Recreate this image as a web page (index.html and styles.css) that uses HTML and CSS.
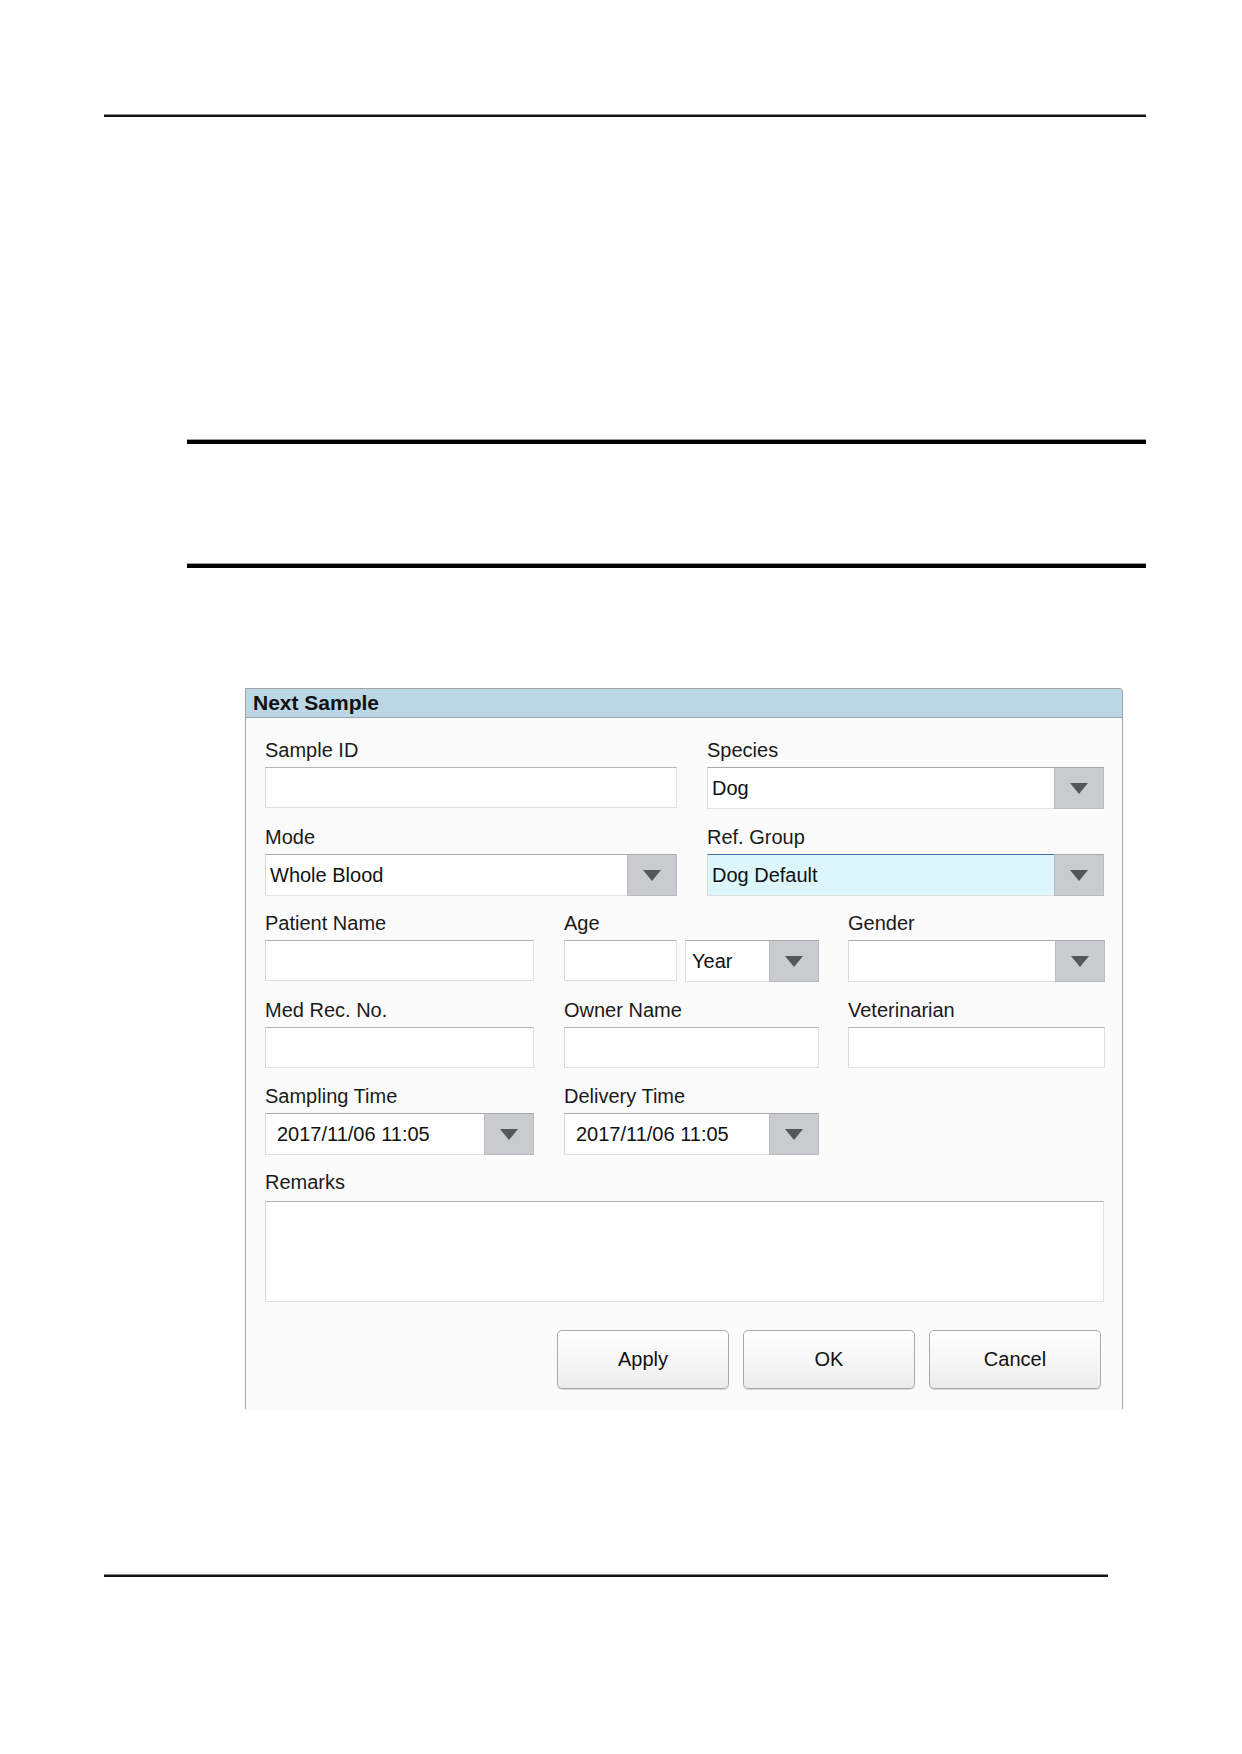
FILE: index.html
```html
<!DOCTYPE html>
<html lang="en">
<head>
<meta charset="utf-8">
<title>Next Sample</title>
<link rel="stylesheet" href="styles.css">
</head>
<body>
<div class="page">
  <div class="rule rule-top"></div>

  <div class="note">
    <div class="rule-thick"></div>
    <div class="note-body"></div>
    <div class="rule-thick"></div>
  </div>

  <div class="dialog">
    <div class="dialog-title">Next Sample</div>
    <div class="dialog-body">
      <div class="grid-2">
        <div class="field">
          <label class="lbl">Sample ID</label>
          <div class="input"></div>
        </div>
        <div class="field">
          <label class="lbl">Species</label>
          <div class="select"><span class="val">Dog</span><span class="btn"><i class="tri"></i></span></div>
        </div>
        <div class="field">
          <label class="lbl">Mode</label>
          <div class="select"><span class="val">Whole Blood</span><span class="btn"><i class="tri"></i></span></div>
        </div>
        <div class="field">
          <label class="lbl">Ref. Group</label>
          <div class="select focused"><span class="val">Dog Default</span><span class="btn"><i class="tri"></i></span></div>
        </div>
      </div>

      <div class="grid-3">
        <div class="field">
          <label class="lbl">Patient Name</label>
          <div class="input"></div>
        </div>
        <div class="field">
          <label class="lbl">Age</label>
          <div class="age-row">
            <div class="input age"></div>
            <div class="select unit"><span class="val">Year</span><span class="btn"><i class="tri"></i></span></div>
          </div>
        </div>
        <div class="field">
          <label class="lbl">Gender</label>
          <div class="select"><span class="val"></span><span class="btn"><i class="tri"></i></span></div>
        </div>

        <div class="field">
          <label class="lbl">Med Rec. No.</label>
          <div class="input"></div>
        </div>
        <div class="field">
          <label class="lbl">Owner Name</label>
          <div class="input"></div>
        </div>
        <div class="field">
          <label class="lbl">Veterinarian</label>
          <div class="input"></div>
        </div>

        <div class="field">
          <label class="lbl">Sampling Time</label>
          <div class="select date"><span class="val">2017/11/06 11:05</span><span class="btn"><i class="tri"></i></span></div>
        </div>
        <div class="field">
          <label class="lbl">Delivery Time</label>
          <div class="select date"><span class="val">2017/11/06 11:05</span><span class="btn"><i class="tri"></i></span></div>
        </div>
        <div class="field"></div>
      </div>

      <div class="field remarks">
        <label class="lbl">Remarks</label>
        <div class="textarea"></div>
      </div>

      <div class="actions">
        <button class="push">Apply</button>
        <button class="push">OK</button>
        <button class="push">Cancel</button>
      </div>
    </div>
  </div>

  <div class="rule rule-bottom"></div>
</div>
</body>
</html>
```

FILE: styles.css
```css
html, body {
  margin: 0;
  padding: 0;
  background: #ffffff;
}

body {
  font-family: "Liberation Sans", Arial, sans-serif;
  color: #111111;
}

.page {
  width: 1242px;
  min-height: 1754px;
  display: flex;
  flex-direction: column;
}

.rule {
  height: 0;
  border-top: 1px solid #8a8a8a;
  border-bottom: 2px solid #151515;
}

.rule-top {
  margin-top: 114px;
  margin-left: 104px;
  width: 1042px;
}

.rule-bottom {
  margin-top: 165px;
  margin-left: 104px;
  width: 1004px;
}

.note {
  margin-top: 322px;
  margin-left: 187px;
  width: 959px;
  display: flex;
  flex-direction: column;
}

.rule-thick {
  height: 0;
  border-top: 1px solid #9a9a9a;
  border-bottom: 4px solid #000000;
}

.note-body {
  height: 119px;
}

/* dialog */
.dialog {
  margin-top: 120px;
  margin-left: 245px;
  width: 876px;
  border: 1px solid #a3a3a3;
  border-bottom: none;
  border-radius: 0 4px 0 0;
  background: #fbfbfb;
}

.dialog-title {
  height: 28px;
  line-height: 28px;
  padding-left: 7px;
  font-size: 21px;
  font-weight: bold;
  color: #111;
  background: #bbd7e5;
  border-bottom: 1px solid #98aab4;
  border-radius: 0 3px 0 0;
}

.dialog-body {
  padding: 20px 18px 20px 19px;
  display: flex;
  flex-direction: column;
}

.grid-2 {
  display: grid;
  grid-template-columns: 412px 397px;
  column-gap: 30px;
  row-gap: 16px;
}

.grid-3 {
  margin-top: 15px;
  display: grid;
  grid-template-columns: 269px 255px 256px;
  column-gap: 30px;
  row-gap: 16px;
}

.grid-3 > .field:nth-child(3n) {
  margin-left: -1px;
}

.field {
  display: flex;
  flex-direction: column;
  gap: 5px;
}

.lbl {
  font-size: 20px;
  line-height: 24px;
  color: #1a1a1a;
}

.input {
  height: 39px;
  background: #ffffff;
  border: 1px solid #e0e0e0;
  border-top-color: #b4b4b4;
  border-left-color: #d8d8d8;
}

.select {
  height: 40px;
  display: flex;
  background: #ffffff;
  border: 1px solid #e2e2e2;
  border-top-color: #a9a9a9;
  border-left-color: #d9d9d9;
}

.select .val {
  flex: 1;
  padding-left: 4px;
  font-size: 20px;
  line-height: 40px;
  color: #111;
  white-space: nowrap;
}

.select .btn {
  width: 48px;
  margin: -1px -1px -1px 0;
  background: #c9cbce;
  border: 1px solid #b9bbbe;
  border-top-color: #a9a9a9;
  display: flex;
  align-items: center;
  justify-content: center;
}

.tri {
  width: 0;
  height: 0;
  border-left: 9px solid transparent;
  border-right: 9px solid transparent;
  border-top: 11px solid #555658;
}

.select.focused {
  background: #dcf6fc;
  border-top-color: #3f6d9c;
}

.age-row {
  display: flex;
  gap: 8px;
}

.input.age {
  width: 111px;
}

.select.unit {
  flex: 1;
}

.select.unit .val {
  padding-left: 6px;
}

.select.date .val {
  padding-left: 11px;
}

.remarks {
  margin-top: 15px;
  gap: 7px;
}

.textarea {
  height: 99px;
  background: #ffffff;
  border: 1px solid #e2e2e2;
  border-top-color: #b0b0b0;
  border-left-color: #d6d6d6;
}

.actions {
  margin-top: 28px;
  padding-right: 3px;
  display: flex;
  justify-content: flex-end;
  gap: 14px;
}

.push {
  width: 172px;
  height: 59px;
  padding: 0;
  font-family: "Liberation Sans", Arial, sans-serif;
  font-size: 20px;
  color: #111;
  background: linear-gradient(#ffffff, #f6f6f6 55%, #ececec);
  border: 1px solid #a9a9a9;
  border-radius: 5px;
  box-shadow: 0 1px 0 #d8d8d8;
}
```
